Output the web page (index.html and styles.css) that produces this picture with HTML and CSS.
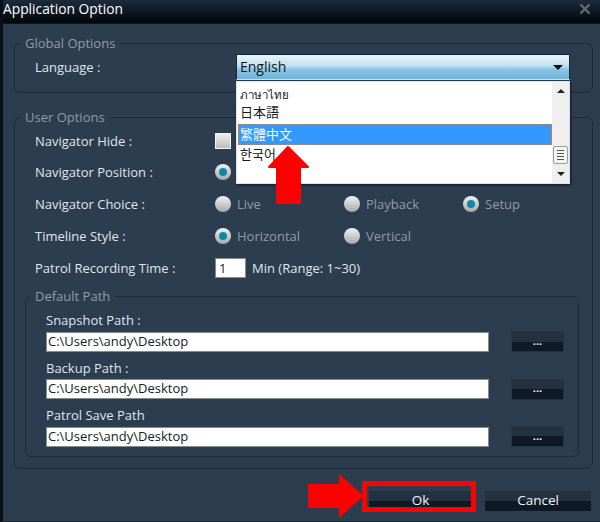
FILE: index.html
```html
<!DOCTYPE html>
<html lang="en">
<head>
<meta charset="utf-8">
<title>Application Option</title>
<link rel="stylesheet" href="styles.css">
</head>
<body>
<div class="window">
  <header class="titlebar">
    <span class="title">Application Option</span>
    <svg class="close" width="12" height="12" viewBox="0 0 12 12"><path d="M1.5 1.5 10.5 10.5M10.5 1.5 1.5 10.5" stroke="#5f6975" stroke-width="2.4" fill="none"/></svg>
  </header>
  <main class="content">
    <fieldset class="group group-global">
      <legend>Global Options</legend>
      <div class="row row-language">
        <span class="label">Language :</span>
        <div class="combo"><span class="combo-text">English</span><i class="caret"></i></div>
      </div>
    </fieldset>
    <fieldset class="group group-user">
      <legend>User Options</legend>
      <div class="row row-first"><span class="label">Navigator Hide :</span><span class="check"></span></div>
      <div class="row"><span class="label">Navigator Position :</span><span class="opt"><i class="radio on"></i></span></div>
      <div class="row"><span class="label">Navigator Choice :</span>
        <span class="opt"><i class="radio"></i>Live</span>
        <span class="opt opt-mid"><i class="radio"></i>Playback</span>
        <span class="opt"><i class="radio on"></i>Setup</span>
      </div>
      <div class="row"><span class="label">Timeline Style :</span>
        <span class="opt"><i class="radio on"></i>Horizontal</span>
        <span class="opt opt-mid"><i class="radio"></i>Vertical</span>
      </div>
      <div class="row"><span class="label">Patrol Recording Time :</span>
        <span class="num">1</span><span class="range">Min (Range: 1~30)</span>
      </div>
      <fieldset class="group group-path">
        <legend>Default Path</legend>
        <div class="path">
          <div class="path-label">Snapshot Path :</div>
          <div class="path-line"><div class="input">C:\Users\andy\Desktop</div><div class="btn btn-small">...</div></div>
        </div>
        <div class="path">
          <div class="path-label">Backup Path :</div>
          <div class="path-line"><div class="input">C:\Users\andy\Desktop</div><div class="btn btn-small">...</div></div>
        </div>
        <div class="path">
          <div class="path-label">Patrol Save Path</div>
          <div class="path-line"><div class="input">C:\Users\andy\Desktop</div><div class="btn btn-small">...</div></div>
        </div>
      </fieldset>
    </fieldset>
    <div class="actions">
      <div class="btn btn-main">Ok</div>
      <div class="btn btn-main btn-cancel">Cancel</div>
    </div>
  </main>

  <div class="popup">
    <ul class="list">
      <li class="item-th" lang="th">ภาษาไทย</li>
      <li class="item-ja" lang="ja">日本語</li>
      <li class="selected" lang="zh-Hant">繁體中文</li>
      <li lang="ko">한국어</li>
    </ul>
    <div class="scrollbar">
      <i class="tri tri-up"></i>
      <div class="thumb"><b></b><b></b><b></b><b></b></div>
      <i class="tri tri-down"></i>
    </div>
  </div>

  <div class="ok-frame"></div>
  <svg class="annot" width="600" height="522" viewBox="0 0 600 522">
    <path d="M288 147 308 167H300V203H277V167H269Z" fill="#f00" stroke="#f00" stroke-width="2" stroke-linejoin="round"/>
    <path d="M309 485H340V476L362 496 340 516V507H309Z" fill="#f00" stroke="#f00" stroke-width="2" stroke-linejoin="round"/>
  </svg>
</div>
</body>
</html>
```
FILE: styles.css
```css
* { box-sizing: border-box; }
html, body { margin: 0; padding: 0; }
body { background: #2d3d50; }
.window {
  position: relative;
  width: 600px;
  height: 522px;
  overflow: hidden;
  background: #2d3d50;
  border-left: 3px solid #0a0f16;
  border-bottom: 1px solid #1a2532;
  font-family: "Open Sans", "Noto Sans", sans-serif;
  font-size: 13px;
  color: #dfe6ec;
}
.titlebar {
  height: 24px;
  margin-left: -3px;
  padding: 0 9px 0 3px;
  display: flex;
  align-items: center;
  justify-content: space-between;
  background: linear-gradient(#1c2c3d, #020408);
  border-bottom: 1px solid #0e1620;
}
.title { color: #fff; font-size: 13.8px; line-height: 18px; margin-top: -5px; }
.close { margin-top: -5px; }
.content { padding: 10px 7px 0 11px; }
.group {
  margin: 0;
  padding: 0 0 0 20px;
  min-width: 0;
  border: 1px solid #1d2a38;
  border-radius: 6px;
}
.group legend {
  padding: 0 5px;
  margin-left: -15px;
  color: #8f9ba8;
  font-size: 13px;
  line-height: 18px;
}
.group-global { height: 59px; }
.group-user { height: 361px; margin-top: 15px; }
.row {
  display: flex;
  align-items: center;
  height: 32px;
}
.row-first { height: 31px; margin-top: -1px; }
.row-language { height: 26px; margin-top: 2px; }
.row-language .label { width: 201px; padding-bottom: 1px; }
.label { width: 180px; flex: none; }
.combo {
  width: 334px;
  height: 26px;
  padding: 0 6px 0 3px;
  display: flex;
  align-items: center;
  justify-content: space-between;
  color: #101820;
  font-size: 14px;
  background: linear-gradient(#eaf5fb 0%, #bfe0f2 45%, #8cc4e6 60%, #6fb2dc 100%);
  border: 1px solid #1a2836;
  border-bottom-color: #d8e4ec;
}
.combo-text { padding-bottom: 2px; }
.caret {
  width: 0; height: 0;
  border-left: 5px solid transparent;
  border-right: 5px solid transparent;
  border-top: 5px solid #0c1218;
}
.check {
  width: 16px; height: 16px;
  background: linear-gradient(#eeeeee, #bdbdbd);
  border: 1px solid #f4f4f4;
}
.opt {
  width: 129px;
  display: flex;
  align-items: center;
  gap: 6px;
  flex: none;
  color: #8f9ba8;
}
.opt-mid { width: 119px; }
.radio {
  position: relative;
  width: 16px; height: 16px;
  flex: none;
  border-radius: 50%;
  background: linear-gradient(#f2f2f2, #a8a8a8);
}
.radio.on::after {
  content: "";
  position: absolute;
  left: 4px; top: 4px;
  width: 8px; height: 8px;
  border-radius: 50%;
  background: #0b8aa3;
}
.num {
  width: 31px; height: 20px;
  padding-left: 3px;
  background: #fff;
  color: #1a1a1a;
  line-height: 18px;
  border: 1px solid #8a8a8a;
}
.range { margin-left: 6px; color: #dfe6ec; }
.group-path {
  width: 554px;
  height: 170px;
  margin: 3px 0 0 -10px;
  padding: 6px 0 0 20px;
}
.group-path legend { margin-left: -16px; }
.path { height: 47.5px; }
.path-label { height: 20px; line-height: 18px; }
.path-line { display: flex; align-items: center; gap: 22px; }
.input {
  width: 443px;
  height: 20px;
  padding-left: 1px;
  background: #fff;
  color: #141c24;
  font-size: 13px;
  line-height: 17px;
  border: 1px solid #8a8a8a;
}
.btn {
  display: flex;
  align-items: center;
  justify-content: center;
  color: #f0f4f8;
  background: linear-gradient(#233140 0 50%, #0f1925 50% 100%);
}
.btn-small {
  width: 53px;
  height: 21px;
  border: 1px solid #25323f;
  font-size: 11px;
  line-height: 14px;
  font-weight: 700;
  padding-bottom: 2px;
}
.actions {
  display: flex;
  justify-content: flex-end;
  gap: 13px;
  margin-top: 22px;
  padding-right: 2px;
}
.btn-main { width: 103px; height: 20px; font-size: 13.5px; line-height: 18px; padding-bottom: 2px; }
.btn-cancel { width: 106px; }
.popup {
  position: absolute;
  left: 233px;
  top: 81px;
  width: 334px;
  height: 103px;
  display: flex;
  background: #fff;
  border: 1px solid #dfe3e6;
  box-shadow: 1px 1px 2px #101820;
}
.list {
  flex: 1;
  margin: 0;
  padding: 1px 0 0 1px;
  list-style: none;
  font-family: "Noto Sans CJK TC", "Noto Sans", sans-serif;
  font-size: 13px;
  color: #1a1a1a;
}
.list li { height: 20.5px; line-height: 18px; padding-left: 2px; }
.list .item-th { line-height: 22px; font-size: 11.5px; }
.list .item-ja { line-height: 16px; }
.list .selected {
  height: 21px;
  background: #3399ff;
  color: #f4f9ff;
  border: 1px dotted #e08020;
  padding-left: 1px;
}
.scrollbar {
  position: relative;
  width: 17px;
  background: #efefef;
  display: flex;
  flex-direction: column;
  align-items: center;
  padding-top: 7px;
}
.tri { width: 0; height: 0; border-left: 4px solid transparent; border-right: 4px solid transparent; }
.tri-up { border-bottom: 4px solid #222; }
.tri-down { border-top: 4px solid #222; margin-top: 8px; }
.thumb {
  width: 15px;
  height: 18px;
  margin-top: 53px;
  padding: 3px 3px;
  display: flex;
  flex-direction: column;
  justify-content: space-between;
  background: #f4f4f4;
  border: 1px solid #9a9a9a;
  border-radius: 2px;
}
.thumb b { display: block; height: 1px; background: #555; }
.ok-frame {
  position: absolute;
  left: 359px;
  top: 481px;
  width: 114px;
  height: 31px;
  border: 5px solid #f00;
}
.annot { position: absolute; left: -3px; top: 0; pointer-events: none; }
```
